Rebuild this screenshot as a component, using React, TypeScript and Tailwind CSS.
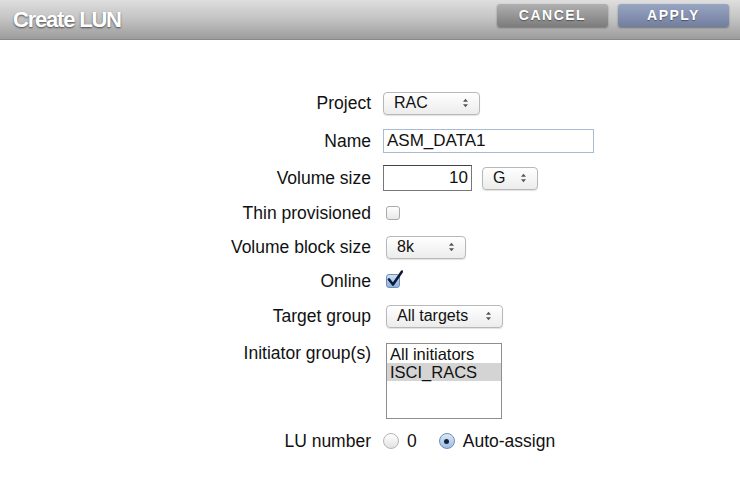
import type { ReactNode } from "react";

const font = { fontFamily: '"Liberation Sans", Arial, sans-serif' };

function Arrows() {
  return (
    <svg viewBox="0 0 8 12" className="w-[7px] h-[10px]" fill="#555">
      <path d="M4 1 L7 4.5 H1 Z M4 11 L7 7.5 H1 Z" />
    </svg>
  );
}

function Select({ value, width }: { value: string; width: string }) {
  return (
    <div
      className={`${width} h-[23px] flex items-center justify-between pl-[10px] pr-[10px] rounded-[4px] border border-[#b8b8b8]
                  bg-gradient-to-b from-white to-[#ececec] shadow-[0_1px_1px_rgba(0,0,0,0.12)] text-[16px] text-[#111]`}
    >
      <span>{value}</span>
      <Arrows />
    </div>
  );
}

function Row({ label, h, top, children }: { label: string; h: string; top?: boolean; children: ReactNode }) {
  return (
    <div className={`flex ${top ? "items-start" : "items-center"} ${h}`}>
      <div className={`w-[371px] text-right text-[17.5px] text-[#111] ${top ? "pt-[6px]" : ""}`}>{label}</div>
      <div className={`ml-[12px] flex items-center ${top ? "pt-[9px]" : ""}`}>{children}</div>
    </div>
  );
}

export default function App() {
  return (
    <div className="w-[740px] h-[492px] bg-white overflow-hidden" style={font}>
      {/* title bar */}
      <div className="h-[40px] flex items-center justify-between pl-[13px] pr-[11px] bg-gradient-to-b from-[#dedede] via-[#c2c2c2] to-[#9c9c9c] border-b border-[#888]">
        <h1 className="text-[22px] font-bold tracking-[-1.2px] text-white [text-shadow:0_1px_2px_rgba(0,0,0,0.6)]">
          Create LUN
        </h1>
        <div className="flex items-center gap-[10px] -mt-[8px]">
          <button className="w-[111px] h-[23px] rounded-[3px] bg-gradient-to-b from-[#b0b0b0] to-[#7c7c7c] text-white text-[14px] font-bold tracking-[1.5px] shadow-[0_1px_2px_rgba(0,0,0,0.35)] [text-shadow:0_1px_1px_rgba(0,0,0,0.4)]">
            CANCEL
          </button>
          <button className="w-[111px] h-[23px] rounded-[3px] bg-gradient-to-b from-[#98a5c2] to-[#717e9e] text-white text-[14px] font-bold tracking-[1.5px] shadow-[0_1px_2px_rgba(0,0,0,0.35)] [text-shadow:0_1px_1px_rgba(0,0,0,0.4)]">
            APPLY
          </button>
        </div>
      </div>

      <div className="pt-[44px]">
        <Row label="Project" h="h-[38px]">
          <Select value="RAC" width="w-[97px]" />
        </Row>
        <Row label="Name" h="h-[38px]">
          <div className="w-[211px] h-[24px] border border-[#a9bbd3] flex items-center px-[3px] text-[17px] text-[#111]">
            ASM_DATA1
          </div>
        </Row>
        <Row label="Volume size" h="h-[36px]">
          <div className="w-[89px] h-[26px] border border-[#777] border-t-[#444] flex items-center justify-end pr-[3px] text-[17px] text-[#111]">
            10
          </div>
          <div className="ml-[10px]">
            <Select value="G" width="w-[56px]" />
          </div>
        </Row>
        <Row label="Thin provisioned" h="h-[34px]">
          <div className="ml-[3px] w-[14px] h-[14px] rounded-[3px] border border-[#aaa] bg-gradient-to-b from-white to-[#e8e8e8]" />
        </Row>
        <Row label="Volume block size" h="h-[34px]">
          <div className="ml-[3px]">
            <Select value="8k" width="w-[80px]" />
          </div>
        </Row>
        <Row label="Online" h="h-[34px]">
          <div className="ml-[3px] relative w-[14px] h-[14px] rounded-[3px] border border-[#6f8fb8] bg-gradient-to-b from-[#cfe0f5] to-[#8fb2dd]">
            <svg viewBox="0 0 16 16" className="absolute -top-[5px] left-[0px] w-[16px] h-[17px]">
              <path d="M2 9 L6 14 L15 1" fill="none" stroke="#0c1a3a" strokeWidth={2.6} strokeLinecap="round" strokeLinejoin="round" />
            </svg>
          </div>
        </Row>
        <Row label="Target group" h="h-[36px]">
          <div className="ml-[3px]">
            <Select value="All targets" width="w-[117px]" />
          </div>
        </Row>
        <Row label="Initiator group(s)" h="h-[92px]" top>
          <div className="ml-[3px] w-[116px] h-[76px] border border-[#8e8e8e] bg-white text-[16.5px] text-[#111] leading-[18px] pt-[1px]">
            <div className="px-[3px]">All initiators</div>
            <div className="px-[3px] bg-[#d4d4d4]">ISCI_RACS</div>
          </div>
        </Row>
        <Row label="LU number" h="h-[30px]">
          <div className="w-[16px] h-[16px] rounded-full border border-[#b5b5b5] bg-gradient-to-b from-white to-[#e2e2e2]" />
          <span className="ml-[8px] text-[17.5px] text-[#111]">0</span>
          <div className="ml-[22px] w-[16px] h-[16px] rounded-full border border-[#6f8fb8] bg-gradient-to-b from-[#dbe8f7] to-[#9dbde3] flex items-center justify-center">
            <div className="w-[5px] h-[5px] rounded-full bg-[#1a2238]" />
          </div>
          <span className="ml-[8px] text-[17.5px] text-[#111]">Auto-assign</span>
        </Row>
      </div>
    </div>
  );
}
